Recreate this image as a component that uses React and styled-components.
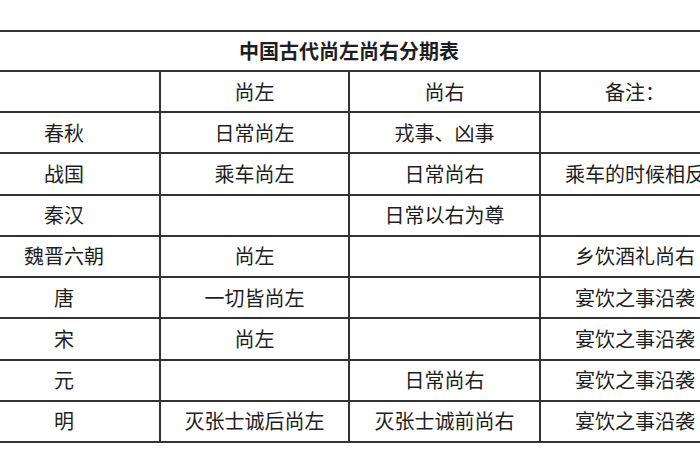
import React from 'react';
import styled, { createGlobalStyle } from 'styled-components';

const GlobalStyle = createGlobalStyle`
  html, body {
    margin: 0;
    padding: 0;
    background: #ffffff;
  }
  body {
    width: 700px;
    height: 470px;
    overflow: hidden;
    font-family: "Noto Sans CJK SC", "Liberation Sans", sans-serif;
  }
`;

const Page = styled.div`
  padding-top: 30px;
  width: 700px;
  height: 470px;
  overflow: hidden;
  box-sizing: border-box;
`;

const Table = styled.table`
  border-collapse: collapse;
  table-layout: fixed;
  margin-left: -33px;
  width: 762px;
  color: #1e1e1e;
`;

const Col = styled.col`
  width: ${p => p.$w}px;
`;

const Row = styled.tr`
  height: ${p => p.$h}px;
`;

const TitleCell = styled.th`
  border-top: 2px solid #333;
  border-bottom: 2px solid #333;
  padding: 0;
  font-size: 20px;
  font-weight: 700;
  line-height: 1;
  text-align: center;
  vertical-align: middle;
`;

const Cell = styled.td`
  border: 2px solid #333;
  padding: 0;
  font-size: 20px;
  font-weight: 400;
  line-height: 1;
  text-align: center;
  vertical-align: middle;
  white-space: nowrap;
  overflow: hidden;
`;

const headers = ['', '尚左', '尚右', '备注：'];

const rows = [
  ['春秋', '日常尚左', '戎事、凶事', ''],
  ['战国', '乘车尚左', '日常尚右', '乘车的时候相反'],
  ['秦汉', '', '日常以右为尊', ''],
  ['魏晋六朝', '尚左', '', '乡饮酒礼尚右'],
  ['唐', '一切皆尚左', '', '宴饮之事沿袭'],
  ['宋', '尚左', '', '宴饮之事沿袭'],
  ['元', '', '日常尚右', '宴饮之事沿袭'],
  ['明', '灭张士诚后尚左', '灭张士诚前尚右', '宴饮之事沿袭'],
];

export default function App() {
  return (
    <Page>
      <GlobalStyle />
      <Table>
        <colgroup>
          <Col $w={192} />
          <Col $w={189} />
          <Col $w={191} />
          <Col $w={190} />
        </colgroup>
        <tbody>
          <Row $h={40}>
            <TitleCell colSpan={4}>中国古代尚左尚右分期表</TitleCell>
          </Row>
          <Row $h={41}>
            {headers.map((h, i) => (
              <Cell key={i}>{h}</Cell>
            ))}
          </Row>
          {rows.map((r, i) => (
            <Row key={i} $h={41.25}>
              {r.map((c, j) => (
                <Cell key={j}>{c}</Cell>
              ))}
            </Row>
          ))}
        </tbody>
      </Table>
    </Page>
  );
}
